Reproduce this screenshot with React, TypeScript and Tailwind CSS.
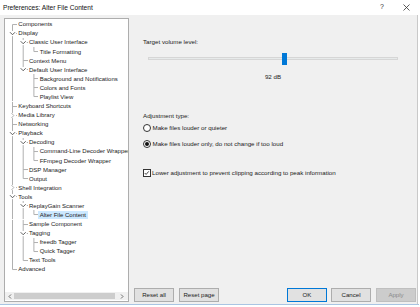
import React from "react";

type Node = { label: string; children?: Node[]; collapsed?: boolean; selected?: boolean };

const tree: Node[] = [
  { label: "Components" },
  {
    label: "Display",
    children: [
      { label: "Classic User Interface", children: [{ label: "Title Formatting" }] },
      { label: "Context Menu" },
      {
        label: "Default User Interface",
        children: [
          { label: "Background and Notifications" },
          { label: "Colors and Fonts" },
          { label: "Playlist View" },
        ],
      },
    ],
  },
  { label: "Keyboard Shortcuts" },
  { label: "Media Library", collapsed: true },
  { label: "Networking" },
  {
    label: "Playback",
    children: [
      {
        label: "Decoding",
        children: [{ label: "Command-Line Decoder Wrapper" }, { label: "FFmpeg Decoder Wrapper" }],
      },
      { label: "DSP Manager" },
      { label: "Output" },
    ],
  },
  { label: "Shell Integration", collapsed: true },
  {
    label: "Tools",
    children: [
      { label: "ReplayGain Scanner", children: [{ label: "Alter File Content", selected: true }] },
      { label: "Sample Component" },
      { label: "Tagging", children: [{ label: "freedb Tagger" }, { label: "Quick Tagger" }] },
      { label: "Text Tools" },
    ],
  },
  { label: "Advanced" },
];

type Row = {
  label: string;
  depth: number;
  guides: boolean[];
  hasNext: boolean;
  firstRoot: boolean;
  expandable: boolean;
  collapsed: boolean;
  selected: boolean;
};

function flatten(nodes: Node[], depth: number, guides: boolean[], out: Row[]) {
  nodes.forEach((n, i) => {
    const hasNext = i < nodes.length - 1;
    out.push({
      label: n.label,
      depth,
      guides,
      hasNext,
      firstRoot: depth === 0 && i === 0,
      expandable: !!n.children || !!n.collapsed,
      collapsed: !!n.collapsed,
      selected: !!n.selected,
    });
    if (n.children && !n.collapsed) flatten(n.children, depth + 1, [...guides, hasNext], out);
  });
  return out;
}

const rows = flatten(tree, 0, [], []);
const H = 9.09;
const MID = H / 2;
const IND = 10.7;
const LINE = "#b0b0b0";

function TreeRow({ r }: { r: Row }) {
  const w = 11.8 + IND * r.depth;
  const xL = 7.5 + IND * r.depth;
  const items: React.ReactNode[] = [];
  r.guides.forEach((g, k) => {
    if (g) {
      const x = 7.5 + IND * k;
      items.push(<line key={"g" + k} x1={x} x2={x} y1={0} y2={H} stroke={LINE} strokeWidth={1} />);
    }
  });
  const top = r.firstRoot ? MID : 0;
  const bottom = r.hasNext ? H : MID;
  if (r.expandable) {
    if (top < MID - 2.6) items.push(<line key="vt" x1={xL} x2={xL} y1={top} y2={MID - 2.6} stroke={LINE} />);
    if (r.hasNext) items.push(<line key="vb" x1={xL} x2={xL} y1={MID + 2.6} y2={bottom} stroke={LINE} />);
    items.push(<line key="st" x1={xL + 3.6} x2={xL + 5} y1={MID} y2={MID} stroke={LINE} />);
    if (r.collapsed) {
      items.push(
        <polyline
          key="ch"
          points={`${xL - 1},${MID - 2.4} ${xL + 1.3},${MID} ${xL - 1},${MID + 2.4}`}
          fill="none"
          stroke="#a6a6a6"
          strokeWidth={0.9}
        />
      );
    } else {
      items.push(
        <polyline
          key="ch"
          points={`${xL - 2.5},${MID - 1.3} ${xL},${MID + 1.2} ${xL + 2.5},${MID - 1.3}`}
          fill="none"
          stroke="#4a4a4a"
          strokeWidth={0.9}
        />
      );
    }
  } else {
    items.push(<line key="v" x1={xL} x2={xL} y1={top} y2={bottom} stroke={LINE} />);
    items.push(<line key="h" x1={xL} x2={xL + 5} y1={MID} y2={MID} stroke={LINE} />);
  }
  return (
    <div className="flex items-center whitespace-nowrap" style={{ height: H }}>
      <svg width={w} height={H} className="shrink-0 block">
        {items}
      </svg>
      <span
        className={
          "inline-block h-[8px] leading-[8px] px-[1.5px] text-[6px] text-[#1a1a1a] " +
          (r.selected ? "bg-[#cce8ff]" : "")
        }
      >
        {r.label}
      </span>
    </div>
  );
}

function Btn({ label, variant }: { label: string; variant?: "default" | "disabled" }) {
  const cls =
    variant === "default"
      ? "border-[#0078d7] bg-[#e1e1e1] text-[#1a1a1a]"
      : variant === "disabled"
      ? "border-[#bfbfbf] bg-[#cccccc] text-[#8a8a8a]"
      : "border-[#adadad] bg-[#e1e1e1] text-[#1a1a1a]";
  return (
    <div className={"w-[40px] h-[14px] border flex items-center justify-center text-[6.1px] " + cls}>
      {label}
    </div>
  );
}

export default function App() {
  return (
    <div
      className="w-[420px] h-[307px] bg-white overflow-hidden flex flex-col"
      style={{ fontFamily: '"Liberation Sans", Arial, sans-serif' }}
    >
      {/* Title bar */}
      <div className="h-[15px] shrink-0 flex items-center bg-white">
        <div className="pl-[3px] text-[6.6px] text-[#111] flex-1">Preferences: Alter File Content</div>
        <div className="text-[7px] text-[#333] mr-[19px]">?</div>
        <svg width="7" height="7" viewBox="0 0 7 7" className="mr-[10px]">
          <path d="M0.5 0.5 L6.5 6.5 M6.5 0.5 L0.5 6.5" stroke="#333" strokeWidth="0.8" />
        </svg>
      </div>
      {/* Body */}
      <div className="w-[418px] h-[289px] shrink-0 bg-[#f0f0f0] border-r border-[#c9c9c9] flex pt-[3px] pb-[2px]">
        {/* Tree */}
        <div className="ml-[4px] w-[125px] border border-[#adadad] bg-white flex flex-col overflow-hidden">
          <div className="flex-1 pt-[0.8px] overflow-hidden">
            {rows.map((r, i) => (
              <TreeRow key={i} r={r} />
            ))}
          </div>
          <div className="h-[8px] mb-[1px] flex items-center bg-[#f0f0f0]">
            <div className="w-[9px] flex items-center justify-center">
              <svg width="4" height="5" viewBox="0 0 4 5">
                <polyline points="3,0.5 1,2.5 3,4.5" fill="none" stroke="#606060" strokeWidth="0.9" />
              </svg>
            </div>
            <div className="flex-1 h-[6px] bg-[#cdcdcd]" />
            <div className="w-[13px] flex items-center justify-center">
              <svg width="4" height="5" viewBox="0 0 4 5">
                <polyline points="1,0.5 3,2.5 1,4.5" fill="none" stroke="#606060" strokeWidth="0.9" />
              </svg>
            </div>
          </div>
        </div>
        {/* Right pane */}
        <div className="flex-1 ml-[5px] flex flex-col">
          <div className="flex-1 pl-[9px] pt-[18.5px] text-[6.2px] text-[#1a1a1a]">
            <div className="h-[9px] leading-[9px]">Target volume level:</div>
            <div className="mt-[6.5px] h-[12px] ml-[5px] w-[250px] flex items-center">
              <div className="relative w-full h-[3px] bg-[#e7eaea] border border-[#d6d6d6]">
                <div className="absolute left-[133px] top-[-5px] w-[5px] h-[12px] bg-[#0078d7]" />
              </div>
            </div>
            <div className="mt-[8px] h-[9px] leading-[9px] ml-[5px] w-[250px] text-center">92 dB</div>
            <div className="mt-[29.5px] h-[9px] leading-[9px]">Adjustment type:</div>
            <div className="mt-[4px] h-[9px] flex items-center">
              <div className="w-[7.5px] h-[7.5px] rounded-full border border-[#333] bg-white" />
              <span className="ml-[2px]">Make files louder or quieter</span>
            </div>
            <div className="mt-[7px] h-[9px] flex items-center">
              <div className="w-[7.5px] h-[7.5px] rounded-full border border-[#333] bg-white flex items-center justify-center">
                <div className="w-[3.5px] h-[3.5px] rounded-full bg-[#111]" />
              </div>
              <span className="ml-[2px]">Make files louder only, do not change if too loud</span>
            </div>
            <div className="mt-[20px] h-[9px] flex items-center">
              <div className="w-[7.5px] h-[7.5px] border border-[#333] bg-white flex items-center justify-center">
                <svg width="6" height="6" viewBox="0 0 6 6">
                  <polyline points="0.8,3 2.3,4.6 5.2,1.2" fill="none" stroke="#222" strokeWidth="0.9" />
                </svg>
              </div>
              <span className="ml-[1.5px]">Lower adjustment to prevent clipping according to peak information</span>
            </div>
          </div>
          <div className="h-[14px] flex items-center mb-[0px]">
            <Btn label="Reset all" />
            <div className="ml-[5px]">
              <Btn label="Reset page" />
            </div>
            <div className="flex-1" />
            <Btn label="OK" variant="default" />
            <div className="ml-[4px]">
              <Btn label="Cancel" />
            </div>
            <div className="ml-[5px] mr-[1px]">
              <Btn label="Apply" variant="disabled" />
            </div>
          </div>
        </div>
      </div>
      <div className="h-[1px] w-[419px] bg-[#a9c5e3]" />
    </div>
  );
}
